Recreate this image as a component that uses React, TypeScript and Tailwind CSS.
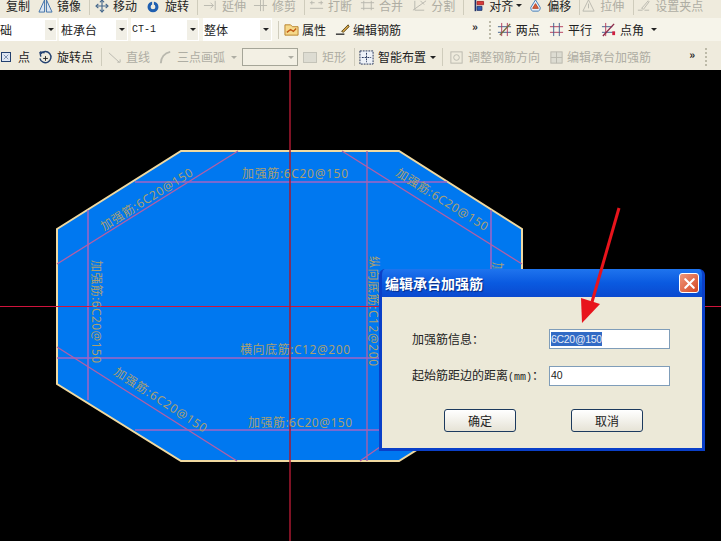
import { Move, X } from "lucide-react";
import type { ReactNode } from "react";

const cjk = { fontFamily: '"Noto Sans CJK SC", "Liberation Sans", sans-serif' };
const mono = { fontFamily: '"Liberation Mono", "Noto Sans CJK SC", monospace' };
const field = { fontFamily: '"Liberation Sans", sans-serif' };

const Caret = ({ className = "" }: { className?: string }) => (
  <span className={`h-0 w-0 border-x-[3px] border-t-[3px] border-x-transparent border-t-[#222] ${className}`} />
);

const Sep = ({ className = "" }: { className?: string }) => (
  <span className={`h-[18px] w-px shrink-0 bg-[#cfccbc] ${className}`} />
);

const Glyph = ({ children, off, w = 15 }: { children: ReactNode; off?: boolean; w?: number }) => (
  <svg
    viewBox="0 0 16 16"
    width={w}
    height={w}
    fill="none"
    stroke={off ? "#b9b8ae" : "#3a3a3a"}
    className="shrink-0"
  >
    {children}
  </svg>
);

function Tool({
  icon,
  label,
  off,
  className = "",
  gap = "gap-1",
}: {
  icon: ReactNode;
  label: string;
  off?: boolean;
  className?: string;
  gap?: string;
}) {
  return (
    <div className={`flex shrink-0 items-center ${gap} ${className}`}>
      {icon}
      <span className={`whitespace-nowrap text-[12px] leading-none ${off ? "text-[#aeada3]" : "text-[#222]"}`}>
        {label}
      </span>
    </div>
  );
}

function Combo({ label, className, isMono }: { label: string; className: string; isMono?: boolean }) {
  return (
    <div className={`flex h-[23px] shrink-0 items-center justify-between bg-white pr-[1px] ${className}`}>
      <span className={isMono ? "text-[10px] text-[#222]" : "text-[12px] text-[#222]"} style={isMono ? mono : cjk}>
        {label}
      </span>
      <span className="flex h-[20px] w-[11px] items-center justify-center bg-[#f1efe6]">
        <Caret />
      </span>
    </div>
  );
}

const Chevrons = ({ className = "" }: { className?: string }) => (
  <span className={`text-[11px] font-bold leading-none text-[#222] ${className}`}>»</span>
);

const Grip = ({ className = "" }: { className?: string }) => (
  <span className={`h-[18px] w-0 border-l-2 border-dotted border-[#bdbaa8] ${className}`} />
);

function TopRow() {
  return (
    <div className="flex h-[18px] items-center overflow-hidden bg-[#efebdd] pb-[7px]">
      <Tool className="ml-[6px]" icon={null} label="复制" gap="gap-0" />
      <Tool
        className="ml-[8px]"
        icon={
          <Glyph>
            <path d="M7 2v13H1zM9 2v13h6z" stroke="#3d6ea8" fill="#dbe6f2" />
          </Glyph>
        }
        label="镜像"
      />
      <Sep className="ml-[8px]" />
      <Tool className="ml-[5px]" icon={<Move size={14} color="#46688c" strokeWidth={2} />} label="移动" />
      <Tool
        className="ml-[9px]"
        icon={
          <Glyph w={14}>
            <circle cx="8" cy="9" r="4.5" stroke="#1f5fb0" strokeWidth="3.5" />
            <path d="M8 1v7" stroke="#efebdd" strokeWidth="2" />
          </Glyph>
        }
        label="旋转"
        gap="gap-[5px]"
      />
      <Sep className="ml-[8px]" />
      <Tool className="ml-[5px]" off icon={<Glyph off><path d="M1 8h10M13 3v10M8 5l3 3-3 3" /></Glyph>} label="延伸" />
      <Tool className="ml-[7px]" off icon={<Glyph off><path d="M1 8h14M8 2v12M11 2v12" /></Glyph>} label="修剪" />
      <Sep className="ml-[8px]" />
      <Tool className="ml-[4px]" off icon={<Glyph off><path d="M1 5h5M10 5h5M1 11h14M3 3v4M13 3v4" /></Glyph>} label="打断" />
      <Tool className="ml-[8px]" off icon={<Glyph off><path d="M1 5h14M1 11h14M4 3v10M12 3v10" /></Glyph>} label="合并" />
      <Tool className="ml-[9px]" off icon={<Glyph off><path d="M1 13L15 3M3 3v10h10M9 3l4 4" /></Glyph>} label="分割" />
      <Sep className="ml-[8px]" />
      <Tool
        className="ml-[9px]"
        icon={
          <Glyph w={13}>
            <path d="M3 1v14" stroke="#1d2f66" strokeWidth="2" />
            <path d="M5 3h8v4H5z" fill="#d83a3a" stroke="#a01f1f" />
            <path d="M5 9h6v5H5z" fill="#2f5fb8" stroke="#1d2f66" />
          </Glyph>
        }
        label="对齐"
        gap="gap-[3px]"
      />
      <Caret className="ml-[3px]" />
      <Tool
        className="ml-[6px]"
        icon={
          <Glyph>
            <path d="M8 2l5 8a3.5 3.5 0 01-2 4H5a3.5 3.5 0 01-2-4z" stroke="#3e7ab5" fill="#e9f0f8" />
            <path d="M8 6l3 5H5z" fill="#d9603a" stroke="#b34322" />
          </Glyph>
        }
        label="偏移"
      />
      <Sep className="ml-[8px]" />
      <Tool className="ml-[1px]" off icon={<Glyph off><path d="M8 2l6 12H2zM8 6v5" /></Glyph>} label="拉伸" />
      <Sep className="ml-[9px]" />
      <Tool className="ml-[2px]" off icon={<Glyph off><path d="M2 13h5M9 13h5M6 11l7-8 1 1-6 8z" /></Glyph>} label="设置夹点" />
    </div>
  );
}

function MiddleRow() {
  return (
    <div className="flex h-[23px] items-center bg-[#f6f4ea]">
      <Combo label="础" className="w-[57px]" />
      <Combo label="桩承台" className="ml-[2px] w-[69px] pl-[2px]" />
      <Combo label="CT-1" className="ml-[3px] w-[68px] pl-px" isMono />
      <Combo label="整体" className="ml-[4px] w-[69px] pl-px" />
      <Sep className="ml-[6px]" />
      <Tool
        className="ml-[5px]"
        icon={
          <Glyph>
            <path d="M1 3h6l2 2h6v9H1z" fill="#f6d98a" stroke="#b9822c" />
            <path d="M3 11l4-3 3 2 3-3" stroke="#c25a16" strokeWidth="1.5" />
          </Glyph>
        }
        label="属性"
        gap="gap-[3px]"
      />
      <Tool
        className="ml-[9px]"
        icon={
          <Glyph>
            <path d="M1 13h9" stroke="#333" strokeWidth="1.5" />
            <path d="M7 10l7-7 1 2-6 6z" fill="#d8a445" stroke="#5c4a1c" />
          </Glyph>
        }
        label="编辑钢筋"
        gap="gap-[3px]"
      />
      <Chevrons className="ml-[71px] -mt-[6px]" />
      <Grip className="ml-[11px]" />
      <Tool
        className="ml-[6px]"
        icon={
          <Glyph>
            <path d="M1 5h14M1 11h14" stroke="#3f5f8f" />
            <path d="M5 1v14M11 1v14" stroke="#b33a5c" />
            <path d="M3 14L14 2" stroke="#77693a" strokeWidth="1.5" />
          </Glyph>
        }
        label="两点"
      />
      <Tool
        className="ml-[9px]"
        icon={
          <Glyph>
            <path d="M1 5h14M1 11h14" stroke="#b33a5c" />
            <path d="M5 1v14M11 1v14" stroke="#3f5f8f" />
          </Glyph>
        }
        label="平行"
      />
      <Tool
        className="ml-[9px]"
        icon={
          <Glyph>
            <path d="M1 5h11M1 11h14" stroke="#3f5f8f" />
            <path d="M5 1v14" stroke="#b33a5c" />
            <path d="M2 15L14 2" stroke="#8e2a4a" strokeWidth="1.5" />
            <rect x="12" y="10" width="3" height="4" fill="#d01f3f" stroke="none" />
          </Glyph>
        }
        label="点角"
      />
      <Caret className="ml-[7px]" />
    </div>
  );
}

function BottomRow() {
  return (
    <div className="flex h-[29px] items-center bg-[#efebdd] pt-[3px]">
      <span className="relative ml-px h-[10px] w-[10px] shrink-0 border border-[#23406f] bg-[#dfe7f3]">
        <X size={8} color="#23406f" strokeWidth={1.5} className="absolute left-0 top-0" />
      </span>
      <span className="ml-[7px] text-[12px] leading-none text-[#222]">点</span>
      <Tool
        className="ml-[8px]"
        icon={
          <Glyph>
            <path d="M2 2l1 5M2 2l5 1" stroke="#23406f" strokeWidth="1.5" />
            <path d="M3 4a6 6 0 11-1 5" stroke="#23406f" strokeWidth="1.5" />
            <path d="M8 6.5v5M5.5 9h5" stroke="#222" />
          </Glyph>
        }
        label="旋转点"
      />
      <Sep className="ml-[8px]" />
      <Tool className="ml-[5px]" off icon={<Glyph off><path d="M2 3l11 10M11 13h3v-3" /></Glyph>} label="直线" />
      <Tool className="ml-[8px]" off icon={<Glyph off><path d="M3 14C3 8 7 3 13 2" strokeWidth="2" /></Glyph>} label="三点画弧" />
      <Caret className="ml-[6px] border-t-[#aeada3]" />
      <div className="ml-[5px] flex h-[18px] w-[56px] shrink-0 items-center justify-end border border-[#a5a598] bg-[#f3f0e4] pr-[3px]">
        <Caret className="border-t-[#aeada3]" />
      </div>
      <Tool className="ml-[5px]" off icon={<span className="h-[11px] w-[14px] border border-[#c4c3b8] bg-[#dddcd2]" />} label="矩形" gap="gap-[5px]" />
      <Sep className="ml-[8px]" />
      <Tool
        className="ml-[4px]"
        icon={
          <Glyph>
            <rect x="1" y="1" width="14" height="14" fill="#eef2f8" stroke="#1f2f55" strokeDasharray="2 1" />
            <path d="M8 3v10M3 8h10" stroke="#1f2f55" strokeDasharray="2 1" />
          </Glyph>
        }
        label="智能布置"
      />
      <Caret className="ml-[4px]" />
      <Sep className="ml-[6px]" />
      <Tool className="ml-[6px]" off icon={<Glyph off><rect x="2" y="2" width="12" height="12" /><circle cx="8" cy="8" r="3" /></Glyph>} label="调整钢筋方向" />
      <Tool className="ml-[9px]" off icon={<Glyph off><rect x="2" y="2" width="12" height="12" fill="#dddcd2" /><path d="M8 2v12M2 8h12" /></Glyph>} label="编辑承台加强筋" gap="gap-[3px]" />
      <Chevrons className="ml-[38px] -mt-[6px]" />
      <Grip className="ml-[10px]" />
    </div>
  );
}

const tan = "#a89f72";
const rebar = "#a264c4";
const rebarPink = "#b45fa4";
const axis = "#d0143c";

function Drawing() {
  const labelStyle = { fontFamily: '"Noto Sans", "Noto Sans CJK SC", sans-serif', fontSize: 12 };
  return (
    <svg viewBox="0 70 721 471" width={721} height={471} className="absolute inset-0">
      <polygon
        points="57,229 181,151 399,151 522,229 522,384 399,461 181,461 57,384"
        fill="#0078f0"
        stroke="#f0d9a0"
        strokeWidth="2"
      />
      <g stroke={rebar} strokeWidth="1.5">
        <path d="M135 182H447M135 430H385M57 358H380" />
        <path d="M88 210V400M491 210V400" />
      </g>
      <g stroke={rebarPink} strokeWidth="1.3">
        <path d="M57 264L238 151M342 151L522 264M57 347L237 461M360 461L522 347M367 151V461" />
      </g>
      <path d="M0 306.5H721" stroke={axis} strokeWidth="1" />
      <path d="M290 70V541" stroke="#a81830" strokeWidth="1.5" />
      <g fill={tan} style={labelStyle}>
        <text x="242" y="178" textLength="106">加强筋:6C20@150</text>
        <text x="240" y="354" textLength="110">横向底筋:C12@200</text>
        <text x="248" y="427" textLength="104">加强筋:6C20@150</text>
        <text transform="translate(104 231) rotate(-32)" textLength="106">加强筋:6C20@150</text>
        <text transform="translate(395 175) rotate(32)" textLength="106">加强筋:6C20@150</text>
        <text transform="translate(113 374) rotate(33)" textLength="108">加强筋:6C20@150</text>
        <text transform="translate(92 260) rotate(90)" textLength="103">加强筋:6C20@150</text>
        <text transform="translate(369 256) rotate(90)" textLength="110">纵向底筋:C12@200</text>
        <text transform="translate(493 262) rotate(90)">加强筋</text>
      </g>
    </svg>
  );
}

function Dialog() {
  return (
    <div className="absolute left-[379px] top-[199px] flex h-[182px] w-[326px] flex-col overflow-hidden rounded-t-[6px] border-x-[3px] border-b-[3px] border-[#0a3fc8] bg-[#0a3fc8]">
      <div className="flex h-[28px] shrink-0 items-center justify-between bg-gradient-to-b from-[#1f74ee] via-[#0a5ae0] to-[#0a49cf] pl-[3px] pr-[3px]">
        <span className="text-[14px] font-bold leading-none text-white [text-shadow:1px_1px_1px_#0a2a80]" style={cjk}>
          编辑承台加强筋
        </span>
        <span className="flex h-[20px] w-[20px] items-center justify-center rounded-[3px] border border-white bg-gradient-to-br from-[#f0977a] to-[#d2431c]">
          <X size={17} color="white" strokeWidth={3} />
        </span>
      </div>
      <div className="flex-1 bg-[#ece9d8] pl-[30px] pt-[32px] text-[12px] text-[#222]">
        <div className="flex h-[20px] items-center">
          <span className="w-[137px] leading-none">加强筋信息：</span>
          <div className="flex h-[20px] w-[121px] items-center border border-[#7f9db9] bg-white pl-px text-[10.5px] tracking-[-0.3px]" style={field}>
            <span className="bg-[#316ac5] leading-[14px] text-[#e4ebf7]">6C20@150</span>
          </div>
        </div>
        <div className="mt-[17px] flex h-[20px] items-center">
          <span className="w-[137px] whitespace-nowrap leading-none">
            起始筋距边的距离<span className="text-[10px]" style={mono}>(mm)</span>：
          </span>
          <div className="flex h-[20px] w-[121px] items-center border border-[#7f9db9] bg-white pl-px text-[10.5px]" style={field}>
            40
          </div>
        </div>
        <div className="mt-[23px] flex gap-[55px] pl-[32px]">
          <button className="h-[23px] w-[72px] rounded-[3px] border border-[#1c3a5e] bg-gradient-to-b from-white to-[#e6e3d6] text-[12px] leading-none">
            确定
          </button>
          <button className="h-[23px] w-[72px] rounded-[3px] border border-[#1c3a5e] bg-gradient-to-b from-white to-[#e6e3d6] text-[12px] leading-none">
            取消
          </button>
        </div>
      </div>
    </div>
  );
}

const Arrow = () => (
  <svg viewBox="0 0 721 471" width={721} height={471} className="pointer-events-none absolute inset-0">
    <path d="M619 138L592 232" stroke="#e8141c" strokeWidth="3" />
    <polygon points="582,253 581,228 600,234" fill="#e8141c" />
  </svg>
);

export default function App() {
  return (
    <div className="flex h-[541px] w-[721px] flex-col overflow-hidden bg-black" style={cjk}>
      <TopRow />
      <MiddleRow />
      <BottomRow />
      <div className="relative flex-1 bg-black">
        <Drawing />
        <Dialog />
        <Arrow />
      </div>
    </div>
  );
}
